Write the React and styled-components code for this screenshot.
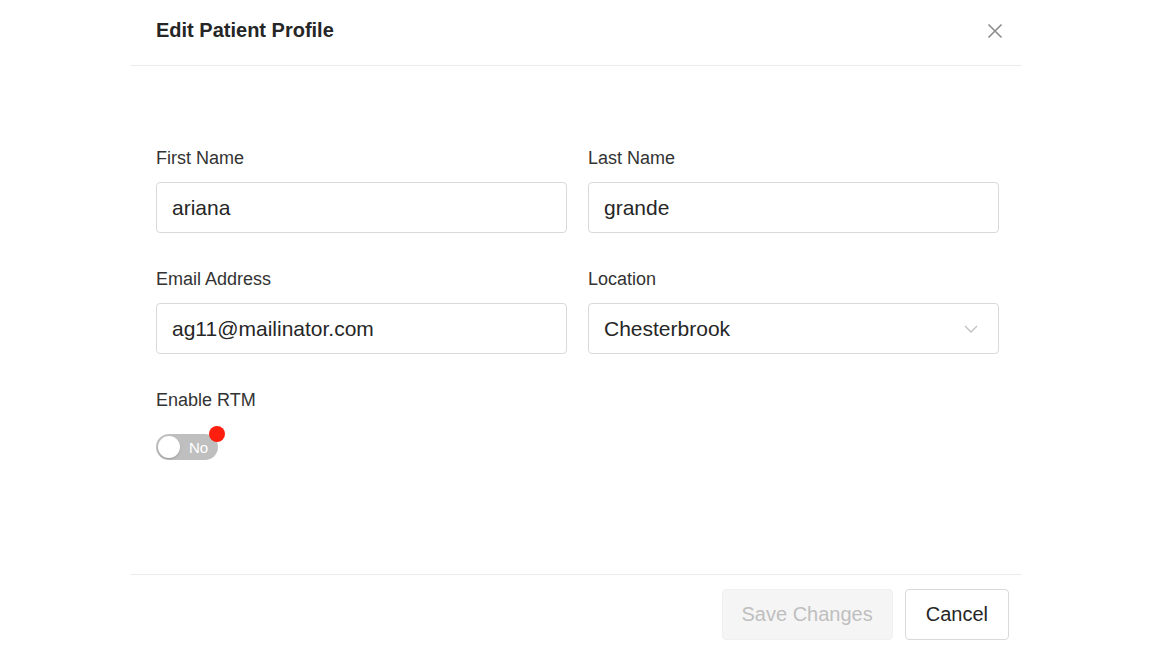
import React from 'react'
import styled, { createGlobalStyle } from 'styled-components'

const GlobalStyle = createGlobalStyle`
  html, body {
    margin: 0;
    padding: 0;
    background: #ffffff;
    font-family: "Liberation Sans", Arial, sans-serif;
  }
`

const Dialog = styled.div`
  width: 892px;
  height: 648px;
  margin-left: 130px;
  display: flex;
  flex-direction: column;
  background: #ffffff;
`

const Header = styled.div`
  height: 66px;
  box-sizing: border-box;
  padding: 0 15px 4px 26px;
  display: flex;
  align-items: center;
  justify-content: space-between;
  border-bottom: 1px solid #ececec;
`

const Title = styled.h1`
  margin: 0;
  font-size: 20px;
  font-weight: 600;
  color: #262626;
`

const CloseButton = styled.button`
  border: 0;
  background: none;
  padding: 0;
  width: 24px;
  height: 24px;
  display: flex;
  align-items: center;
  justify-content: center;
  cursor: pointer;
`

const Body = styled.div`
  flex: 1;
  padding: 80px 23px 0 26px;
`

const Grid = styled.div`
  display: grid;
  grid-template-columns: 411px 411px;
  column-gap: 21px;
  row-gap: 34px;
`

const Field = styled.div`
  display: flex;
  flex-direction: column;
`

const Label = styled.label`
  font-size: 18px;
  line-height: 24px;
  color: #333333;
  margin-bottom: ${props => (props.wide ? '22px' : '12px')};
`

const InputBox = styled.div`
  height: 51px;
  box-sizing: border-box;
  border: 1px solid #d9d9d9;
  border-radius: 4px;
  padding: 0 20px 0 15px;
  display: flex;
  align-items: center;
  justify-content: space-between;
  font-size: 21px;
  color: #262626;
`

const Switch = styled.div`
  position: relative;
  width: 62px;
  height: 26px;
  border-radius: 13px;
  background: #bfbfbf;
  display: flex;
  align-items: center;
  box-sizing: border-box;
  padding: 0 2px;
`

const Knob = styled.span`
  width: 22px;
  height: 22px;
  border-radius: 50%;
  background: #ffffff;
  box-shadow: 0 1px 2px rgba(0, 0, 0, 0.2);
`

const SwitchText = styled.span`
  margin-left: 9px;
  font-size: 15px;
  color: #ffffff;
`

const Dot = styled.span`
  position: absolute;
  top: -8px;
  right: -7px;
  width: 16px;
  height: 16px;
  border-radius: 50%;
  background: #ff1f0f;
`

const Footer = styled.div`
  border-top: 1px solid #ececec;
  padding: 14px 13px 8px 0;
  display: flex;
  justify-content: flex-end;
  gap: 12px;
`

const Button = styled.button`
  height: 51px;
  box-sizing: border-box;
  padding: 0 ${props => (props.disabled ? '19px' : '20px')};
  font-family: inherit;
  font-size: 20px;
  border-radius: 4px;
  border: 1px solid ${props => (props.disabled ? '#f0f0f0' : '#d9d9d9')};
  background: ${props => (props.disabled ? '#f5f5f5' : '#ffffff')};
  color: ${props => (props.disabled ? '#bfbfbf' : '#262626')};
`

const App = () => (
  <>
    <GlobalStyle />
    <Dialog>
      <Header>
        <Title>Edit Patient Profile</Title>
        <CloseButton aria-label="Close">
          <svg width="16" height="16" viewBox="0 0 16 16">
            <path d="M1.5 1.5 L14.5 14.5 M14.5 1.5 L1.5 14.5" stroke="#8c8c8c" strokeWidth="1.6" fill="none" />
          </svg>
        </CloseButton>
      </Header>
      <Body>
        <Grid>
          <Field>
            <Label>First Name</Label>
            <InputBox>ariana</InputBox>
          </Field>
          <Field>
            <Label>Last Name</Label>
            <InputBox>grande</InputBox>
          </Field>
          <Field>
            <Label>Email Address</Label>
            <InputBox>ag11@mailinator.com</InputBox>
          </Field>
          <Field>
            <Label>Location</Label>
            <InputBox>
              Chesterbrook
              <svg width="14" height="8" viewBox="0 0 14 8">
                <path d="M1 1 L7 7 L13 1" stroke="#bfbfbf" strokeWidth="1.3" fill="none" />
              </svg>
            </InputBox>
          </Field>
          <Field>
            <Label wide>Enable RTM</Label>
            <Switch>
              <Knob />
              <SwitchText>No</SwitchText>
              <Dot />
            </Switch>
          </Field>
        </Grid>
      </Body>
      <Footer>
        <Button disabled>Save Changes</Button>
        <Button>Cancel</Button>
      </Footer>
    </Dialog>
  </>
)

export default App
